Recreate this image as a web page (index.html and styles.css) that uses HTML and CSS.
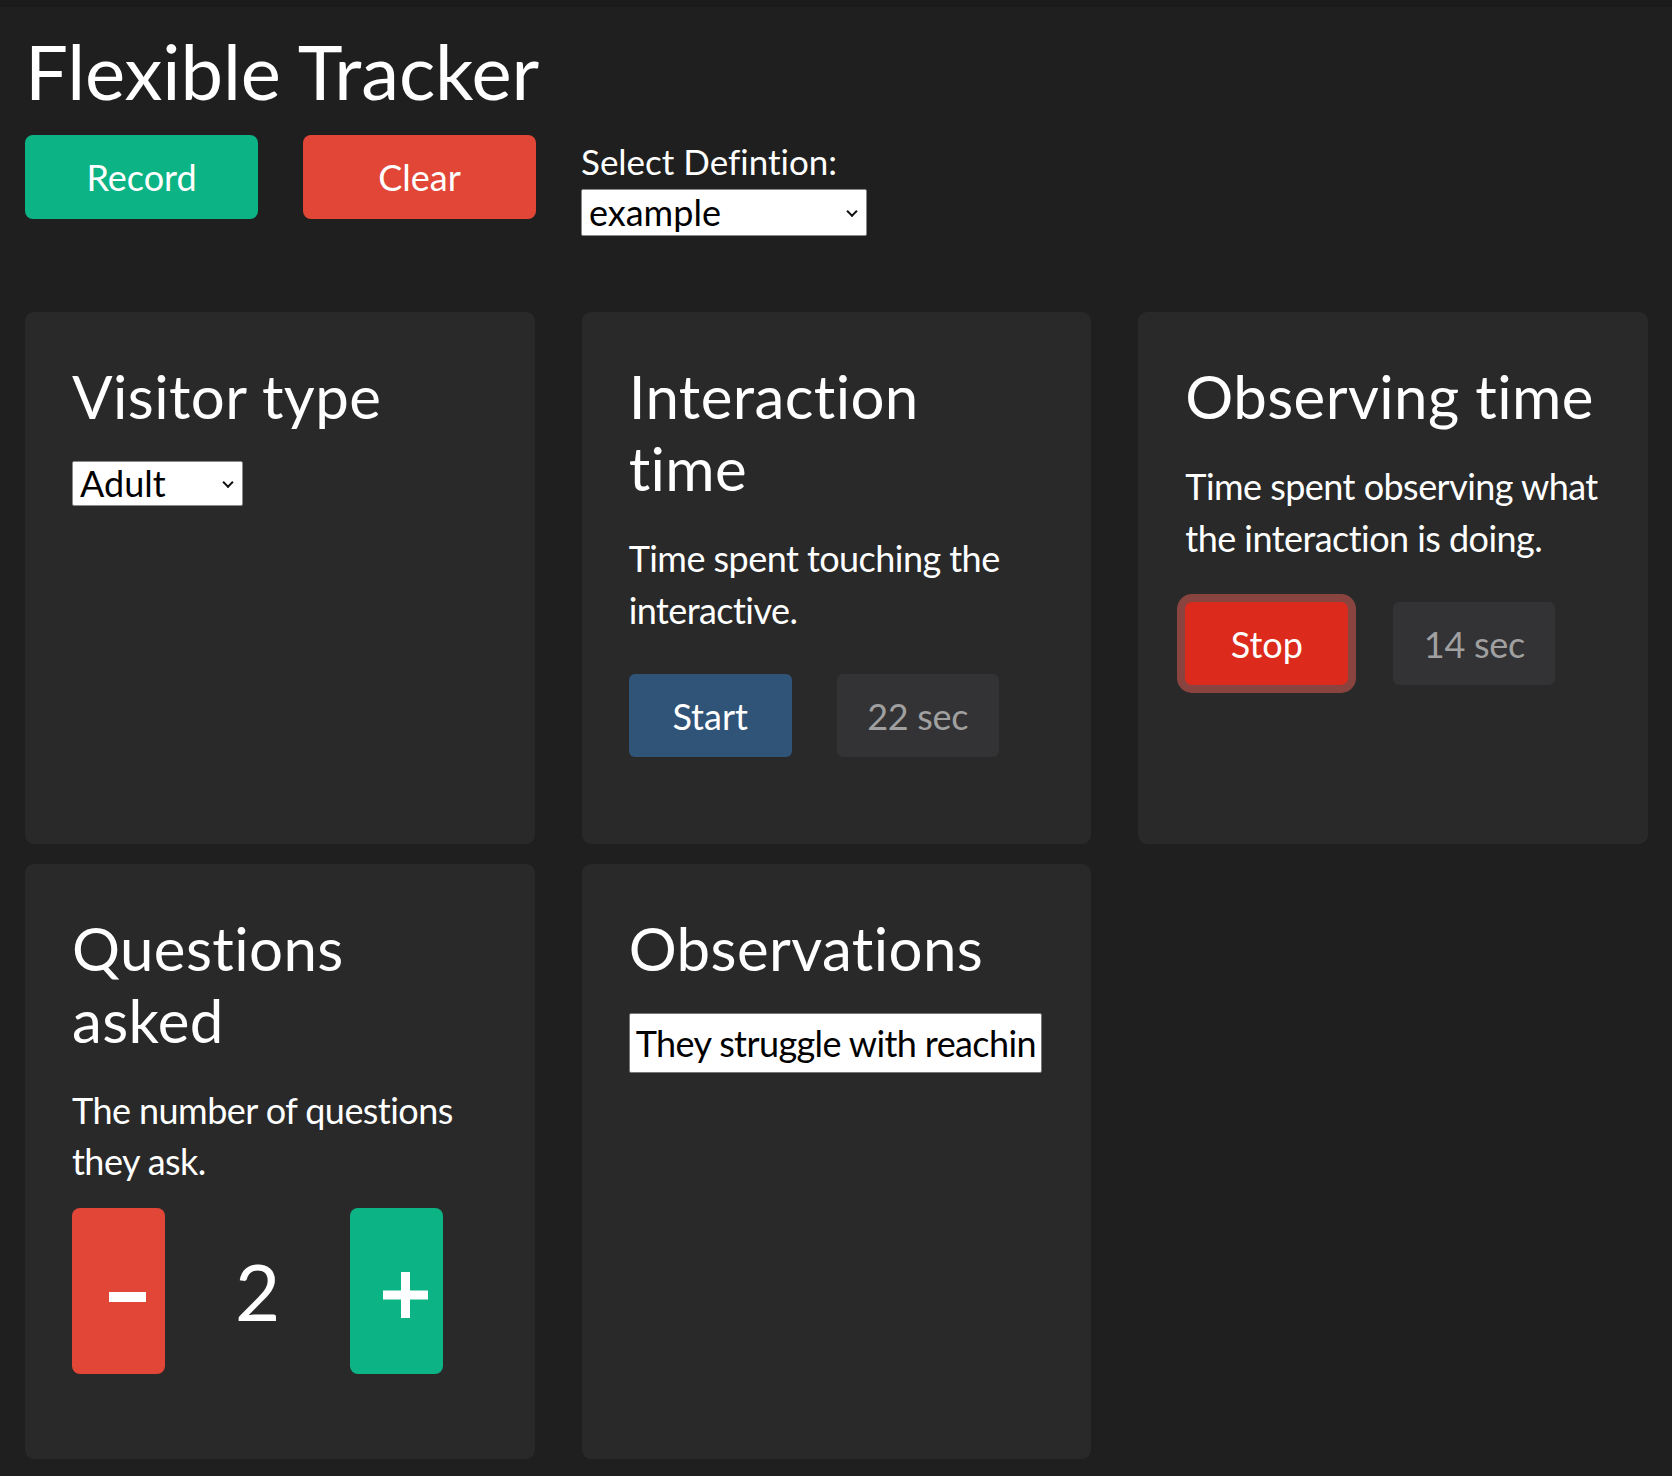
FILE: index.html
```html
<!DOCTYPE html>
<html lang="en">
<head>
<meta charset="utf-8">
<title>Flexible Tracker</title>
<link rel="stylesheet" href="styles.css">
</head>
<body>
<div class="page">
  <header class="top">
    <h1 class="title">Flexible Tracker</h1>
    <div class="toolbar">
      <button class="btn btn-record" type="button">Record</button>
      <button class="btn btn-clear" type="button">Clear</button>
      <div class="def">
        <label class="def-label" for="def-select">Select Defintion:</label>
        <span class="select-wrap">
          <select id="def-select" class="select def-select"><option>example</option></select>
        </span>
      </div>
    </div>
  </header>

  <main class="grid">
    <section class="card">
      <h2 class="card-title">Visitor type</h2>
      <span class="select-wrap">
        <select class="select visitor-select"><option>Adult</option><option>Child</option></select>
      </span>
    </section>

    <section class="card">
      <h2 class="card-title">Interaction time</h2>
      <p class="card-desc">Time spent touching the interactive.</p>
      <div class="timer-row">
        <button class="btn timer-btn timer-start" type="button">Start</button>
        <span class="timer-value">22 sec</span>
      </div>
    </section>

    <section class="card">
      <h2 class="card-title">Observing time</h2>
      <p class="card-desc">Time spent observing what the interaction is doing.</p>
      <div class="timer-row">
        <button class="btn timer-btn timer-stop" type="button">Stop</button>
        <span class="timer-value">14 sec</span>
      </div>
    </section>

    <section class="card">
      <h2 class="card-title">Questions asked</h2>
      <p class="card-desc">The number of questions they ask.</p>
      <div class="counter">
        <button class="btn count-btn count-minus" type="button" aria-label="Decrease">
          <svg width="37" height="10" viewBox="0 0 37 10"><rect x="0" y="0" width="37" height="10" fill="#fff"/></svg>
        </button>
        <span class="count-value">2</span>
        <button class="btn count-btn count-plus" type="button" aria-label="Increase">
          <svg width="45" height="46" viewBox="0 0 45 46"><rect x="0" y="18.5" width="45" height="9" fill="#fff"/><rect x="18" y="0" width="9" height="46" fill="#fff"/></svg>
        </button>
      </div>
    </section>

    <section class="card">
      <h2 class="card-title">Observations</h2>
      <input class="obs-input" type="text" value="They struggle with reaching the top shelf">
    </section>
  </main>
</div>
</body>
</html>
```

FILE: styles.css
```css
html, body {
  margin: 0;
  background: #1f1f1f;
}

body {
  font-family: Lato, "Open Sans", "Liberation Sans", sans-serif;
  color: #ffffff;
  font-variant-ligatures: none;
  font-feature-settings: "liga" 0, "clig" 0;
}

.page {
  border-top: 7px solid #1b1b1b;
  padding: 18px 24px 17px 25px;
}

.title {
  margin: 0 0 19px 0;
  font-size: 76px;
  font-weight: 400;
  line-height: 1.2;
  letter-spacing: -0.1px;
}

.toolbar {
  display: flex;
  align-items: flex-start;
  gap: 45px;
}

.btn {
  font-family: inherit;
  font-variant-ligatures: none;
  border: none;
  color: #fff;
  cursor: pointer;
  padding: 0;
}

.btn-record,
.btn-clear {
  width: 233px;
  height: 84px;
  border-radius: 8px;
  font-size: 36px;
}

.btn-record { background: #0cb485; }
.btn-clear { background: #e14637; }

.def {
  display: flex;
  flex-direction: column;
  align-items: flex-start;
  gap: 7px;
  padding-top: 5px;
}

.def-label {
  font-size: 35px;
  line-height: 1.2;
}

/* select with a chevron drawn over its right end */
.select-wrap {
  position: relative;
  display: inline-block;
  line-height: 0;
}

.select-wrap::after {
  content: "";
  position: absolute;
  right: 11px;
  top: 50%;
  width: 6px;
  height: 6px;
  border-right: 2.5px solid #111;
  border-bottom: 2.5px solid #111;
  transform: translateY(-70%) rotate(45deg);
  pointer-events: none;
}

.select {
  appearance: none;
  -webkit-appearance: none;
  box-sizing: border-box;
  border: 1px solid #8a8a8a;
  border-radius: 2px;
  padding: 0 30px 0 7px;
  font-family: inherit;
  font-size: 36px;
  line-height: 1.2;
  background: #fff;
  color: #000;
  margin: 0;
}

.def-select {
  width: 286px;
  height: 47px;
}

.visitor-select {
  width: 171px;
  height: 45px;
}

.grid {
  margin-top: 76px;
  display: grid;
  grid-template-columns: repeat(3, 1fr);
  column-gap: 47px;
  row-gap: 20px;
}

.card {
  background: #292929;
  border-radius: 9px;
  padding: 48px 47px 85px 47px;
}

.card-title {
  margin: 0 0 29px 0;
  font-size: 60px;
  font-weight: 400;
  line-height: 1.2;
  letter-spacing: 0.4px;
}

.card-desc {
  margin: 0 0 38px 0;
  font-size: 36px;
  line-height: 1.42857;
  letter-spacing: -0.55px;
}

.timer-row {
  display: flex;
  align-items: center;
  gap: 45px;
  margin-bottom: 2px;
}

.timer-btn {
  width: 163px;
  height: 83px;
  border-radius: 6px;
  font-size: 36px;
}

.timer-start { background: #305378; }

.timer-stop {
  background: #dc2a1c;
  box-shadow: 0 0 0 8px #8a4440;
  border-radius: 7px;
}

.timer-value {
  width: 162px;
  height: 83px;
  border-radius: 6px;
  background: #333335;
  color: #a0a0a0;
  font-size: 36px;
  letter-spacing: -0.3px;
  display: flex;
  align-items: center;
  justify-content: center;
}

.counter {
  display: flex;
  align-items: center;
}

.card-desc + .counter { margin-top: -18px; }

.count-btn {
  width: 93px;
  height: 166px;
  border-radius: 8px;
  display: flex;
  align-items: center;
  justify-content: center;
}

.count-minus { background: #e14637; padding: 12px 0 0 18px; }
.count-plus { background: #0cb485; padding: 8px 0 0 17px; }

.count-value {
  width: 185px;
  text-align: center;
  font-size: 78px;
  line-height: 1;
}

.obs-input {
  width: 413px;
  height: 60px;
  box-sizing: border-box;
  border: 1px solid #767676;
  border-radius: 2px;
  padding: 0 6px;
  font-family: inherit;
  font-size: 36px;
  letter-spacing: -0.6px;
  color: #000;
  background: #fff;
}
```
